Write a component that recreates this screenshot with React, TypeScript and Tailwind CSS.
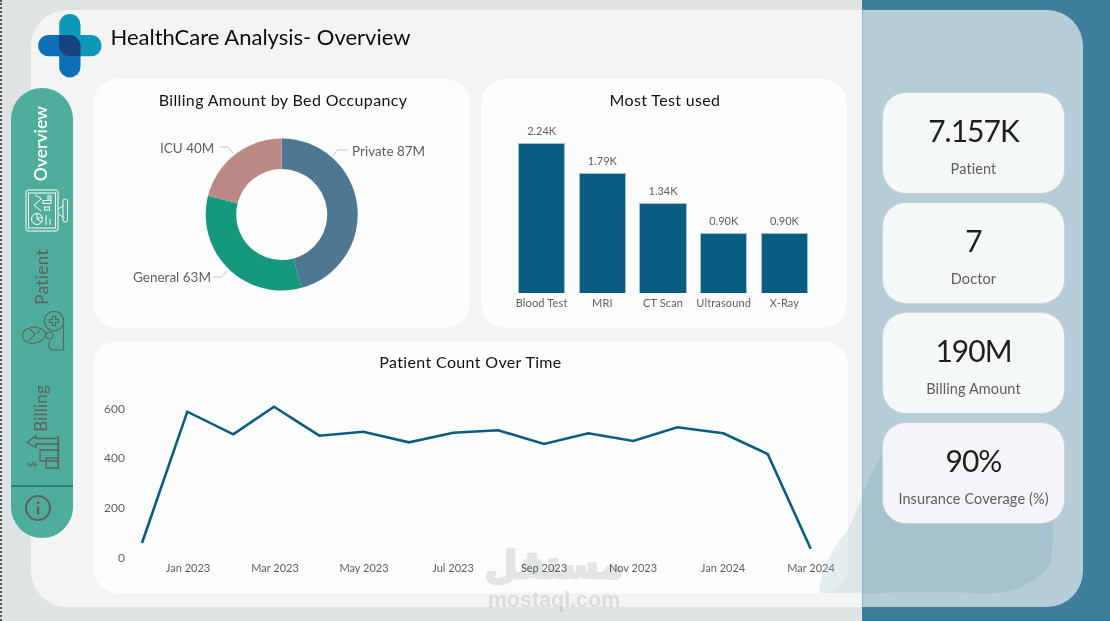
import React from "react";

const cx = 281.7, cy = 214.5, R = 76, r = 45.5;
const pol = (rad: number, a: number) => [cx + rad * Math.sin(a), cy - rad * Math.cos(a)];
const seg = (from: number, to: number) => {
  const a0 = (from / 190) * 2 * Math.PI, a1 = (to / 190) * 2 * Math.PI;
  const large = a1 - a0 > Math.PI ? 1 : 0;
  const [x0, y0] = pol(R, a0), [x1, y1] = pol(R, a1), [x2, y2] = pol(r, a1), [x3, y3] = pol(r, a0);
  return `M${x0} ${y0}A${R} ${R} 0 ${large} 1 ${x1} ${y1}L${x2} ${y2}A${r} ${r} 0 ${large} 0 ${x3} ${y3}Z`;
};

const linePts = "142,543 187.3,411.7 233.3,434.3 274,406.7 319.3,435.7 363.3,431.7 409,442.3 453.3,432.7 498.3,430.3 544,444 588.3,433.3 633.3,441 677.3,427.3 723.3,433.3 767.7,454 810.7,548.7";

const blob = "M818 598C820 570 832 548 848 530C856 515 866 480 882 455C930 430 990 425 1045 423C1052 480 1056 540 1050 565C1030 590 1000 596 970 593C930 590 880 592 818 598Z";

const bars = [
  { v: "2.24K", l: "Blood Test", h: "h-[150px]" },
  { v: "1.79K", l: "MRI", h: "h-[120px]" },
  { v: "1.34K", l: "CT Scan", h: "h-[90px]" },
  { v: "0.90K", l: "Ultrasound", h: "h-[60px]" },
  { v: "0.90K", l: "X-Ray", h: "h-[60px]" },
];

const kpis = [
  { v: "7.157K", l: "Patient", c: "bg-[#f5f8f9]" },
  { v: "7", l: "Doctor", c: "bg-[#f5f8f9]" },
  { v: "190M", l: "Billing Amount", c: "bg-[#f5f8f9]" },
  { v: "90%", l: "Insurance Coverage (%)", c: "bg-[#f3f5f9]" },
];

const Logo = () => (
  <svg width="64" height="64" viewBox="37.5 14 64 64" className="ml-[6.5px] mt-[4px] shrink-0">
    <defs>
      <linearGradient id="v" x1="0" y1="0" x2="0" y2="1">
        <stop offset="0.45" stopColor="#0d97b8" />
        <stop offset="0.55" stopColor="#0e6fb8" />
      </linearGradient>
      <linearGradient id="h" x1="0" y1="0" x2="1" y2="0">
        <stop offset="0.45" stopColor="#0e6fb8" />
        <stop offset="0.55" stopColor="#0d97b8" />
      </linearGradient>
    </defs>
    <rect x="58.7" y="14" width="21.3" height="63.4" rx="10.6" fill="url(#v)" />
    <rect x="37.7" y="35" width="63.4" height="21.3" rx="10.6" fill="url(#h)" />
    <path d="M58.7 35H69A11 11 0 0 1 80 46V56.3H69.5A10.8 10.8 0 0 1 58.7 45.5Z" fill="#17427f" />
  </svg>
);

const MonitorIcon = () => (
  <svg width="46" height="44" viewBox="9 3 46 44" fill="none" stroke="#fff" strokeWidth="1" className="self-start ml-[13px] mt-[8px]">
    <rect x="11" y="4" width="32" height="41" rx="2" />
    <rect x="13.5" y="7" width="27" height="35" />
    <path d="M20 9L27 13M26 13L19 19L26 25" />
    <rect x="28" y="14.5" width="8" height="3" />
    <rect x="29.5" y="21" width="5" height="3" />
    <rect x="33" y="10" width="3" height="3" />
    <circle cx="22" cy="33" r="5.5" />
    <path d="M22 27.5V33L26.5 36M22 33L27 31" />
    <path d="M31 29V39M35 33V39" />
    <path d="M43 23L48 20M43 28L48 31M40 25H41" />
    <rect x="48" y="13" width="4.5" height="23" rx="2" />
  </svg>
);

const PatientIcon = () => (
  <svg width="46" height="44" viewBox="7 3 46 44" fill="none" stroke="#5f6064" strokeWidth="1.1" className="self-start ml-[11px] mt-[3px]">
    <circle cx="39" cy="16" r="9.7" />
    <path d="M37.5 11.5H40.5V14.5H43.5V17.5H40.5V20.5H37.5V17.5H34.5V14.5H37.5Z" />
    <path d="M48.5 20V45H38C34 45 33 40 34.5 36" />
    <circle cx="34.5" cy="30.5" r="3.5" />
    <path d="M31 30C30 25 25 23 22 22.5C20 21.5 17 22 15 23C10 24 7.5 27 7.5 30.5C7.5 34 10 37 13 37C15 38.5 18 39 21 37.5C25 38 28 35 31 30Z" />
    <path d="M15 24L20 29L14 36M24 25L23 29" />
  </svg>
);

const BillingIcon = () => (
  <svg width="38" height="36" viewBox="23 434 38 36" fill="none" stroke="#5f6064" strokeWidth="1.3" className="self-start ml-[12px] mt-[3px]">
    <path d="M58.3 435V468" strokeWidth="1.6" />
    <path d="M58.3 437.5H36V434.8L27 441.5L36 446.5V443H58.3" />
    <path d="M58.3 449H40V460H58.3M58.3 457H46V467H58.3" />
    <text x="0" y="0" transform="translate(27.5 461) rotate(-90) translate(-6 8)" fill="#5f6064" stroke="none" fontSize="12" fontFamily="Lato, sans-serif">$</text>
  </svg>
);

const Vert = ({ children, cls }: { children: React.ReactNode; cls: string }) => (
  <div className={"[writing-mode:vertical-rl] rotate-180 leading-[24px] " + cls}>{children}</div>
);

export default function App() {
  return (
    <div className="relative w-[1110px] h-[621px] overflow-hidden flex pt-[10px] pb-[14px] pl-[31px] pr-[27px] bg-[linear-gradient(to_right,#dfe3e3_862px,#3f7e9a_862px)] font-['Lato',sans-serif] text-[#605e5c]">
      <div className="w-[831px] h-full bg-[#f3f5f5] rounded-l-[36px] flex flex-col shrink-0">
        <header className="h-[69px] flex items-start">
          <Logo />
          <h1 className="ml-[9px] mt-[14px] text-[22px] leading-[26px] text-[#0c0c0c] font-normal">HealthCare Analysis- Overview</h1>
        </header>
        <div className="flex flex-1">
          <nav className="-ml-[20px] mt-[9px] w-[62px] h-[450px] rounded-[31px] bg-[#4fae9b] flex flex-col shrink-0 relative z-10">
            <div className="pt-[18px] flex flex-col items-center h-[397px]">
              <Vert cls="text-[17.5px] text-white font-semibold ml-[-2px]">Overview</Vert>
              <MonitorIcon />
              <Vert cls="mt-[16px] text-[17px] text-[#5f6064] tracking-[0.4px]">Patient</Vert>
              <PatientIcon />
              <Vert cls="mt-[33px] text-[17px] text-[#5f6064] tracking-[0.2px] ml-[-2px]">Billing</Vert>
              <BillingIcon />
            </div>
            <div className="h-[2px] bg-[#2f7d6e]" />
            <div className="flex-1 flex items-start justify-center pt-[8px] pr-[8px]">
              <svg width="26" height="26" viewBox="0 0 26 26" fill="none" stroke="#5f6064" strokeWidth="2">
                <circle cx="13" cy="13" r="12" />
                <path d="M13 11.5V19.5" strokeWidth="2.6" />
                <path d="M13 6.5V9" strokeWidth="2.6" />
              </svg>
            </div>
          </nav>
          <main className="ml-[20px] w-[755px]">
            <div className="flex gap-[11px] h-[249px]">
              <section className="relative w-[377px] bg-[#fcfefe] rounded-[25px]">
                <h2 className="pt-[11px] text-center text-[16px] leading-[20px] text-[#111] tracking-[0.35px] font-normal pl-[3px]">Billing Amount by Bed Occupancy</h2>
                <svg width="377" height="249" viewBox="93 79 377 249" className="absolute inset-0">
                  <path d={seg(0, 87)} fill="#4e7892" />
                  <path d={seg(87, 150)} fill="#14997d" />
                  <path d={seg(150, 190)} fill="#bc8886" />
                  <g fill="none" stroke="#c4c4c4" strokeWidth="1">
                    <path d="M333 156L337 150H348" />
                    <path d="M220 147H228L233 153" />
                    <path d="M213 277H222L227 271" />
                  </g>
                  <g fontSize="13.5" fill="#605e5c" fontFamily="Lato, sans-serif">
                    <text x="352" y="156">Private 87M</text>
                    <text x="160" y="153">ICU 40M</text>
                    <text x="133" y="282">General 63M</text>
                  </g>
                </svg>
              </section>
              <section className="w-[366px] bg-[#fcfefe] rounded-[25px] flex flex-col">
                <h2 className="pt-[11px] text-center text-[16px] leading-[20px] text-[#111] tracking-[0.35px] font-normal pl-[2px]">Most Test used</h2>
                <div className="mt-[20px] pl-[37px] flex gap-[13.4px] items-end h-[163px]">
                  {bars.map((b) => (
                    <div key={b.l} className="w-[47.3px] flex flex-col items-center">
                      <span className="text-[11px] leading-[14px] mb-[5px] whitespace-nowrap">{b.v}</span>
                      <div className={"w-[47.3px] bg-[#0a5c80] border border-[#9dc0d2] border-b-0 " + b.h} />
                    </div>
                  ))}
                </div>
                <div className="mt-[3px] pl-[37px] flex gap-[13.4px]">
                  {bars.map((b) => (
                    <span key={b.l} className="w-[47.3px] text-center text-[11px] leading-[14px] whitespace-nowrap flex justify-center tracking-[0.15px]">{b.l}</span>
                  ))}
                </div>
              </section>
            </div>
            <section className="relative mt-[13px] h-[252px] bg-[#fcfefe] rounded-[25px]">
              <h2 className="pt-[11px] text-center text-[16px] leading-[20px] text-[#111] tracking-[0.35px] font-normal">Patient Count Over Time</h2>
              <svg width="755" height="252" viewBox="93 341 755 252" className="absolute inset-0">
                <polyline points={linePts} fill="none" stroke="#0a5c80" strokeWidth="2.6" strokeLinejoin="miter" />
                <g fontSize="12" fill="#605e5c" fontFamily="Lato, sans-serif" textAnchor="end">
                  <text x="125" y="413">600</text>
                  <text x="125" y="462">400</text>
                  <text x="125" y="512">200</text>
                  <text x="125" y="562">0</text>
                </g>
                <g fontSize="11" fill="#605e5c" fontFamily="Lato, sans-serif" textAnchor="middle">
                  <text x="188" y="572">Jan 2023</text>
                  <text x="275" y="572">Mar 2023</text>
                  <text x="364" y="572">May 2023</text>
                  <text x="453" y="572">Jul 2023</text>
                  <text x="544" y="572">Sep 2023</text>
                  <text x="633" y="572">Nov 2023</text>
                  <text x="723" y="572">Jan 2024</text>
                  <text x="811" y="572">Mar 2024</text>
                </g>
              </svg>
            </section>
          </main>
        </div>
      </div>

      <aside className="relative flex-1 h-full bg-[#b5cdd7] rounded-r-[36px] border-l border-[#8ab8e0] pt-[82px] pl-[19px] pr-[18px] flex flex-col gap-[8px]">
        {kpis.map((k) => (
          <div key={k.l} className={"relative z-20 h-[102px] rounded-[24px] border border-[#cfd2d3] flex flex-col items-center " + k.c}>
            <span className="mt-[17px] text-[30px] leading-[40px] text-[#201f1e] tracking-[-1px]">{k.v}</span>
            <span className="mt-[10px] text-[14.5px] leading-[18px] whitespace-nowrap tracking-[0.1px]">{k.l}</span>
          </div>
        ))}
      </aside>

      <svg width="1110" height="621" viewBox="0 0 1110 621" className="absolute inset-0 z-10 pointer-events-none">
        <defs>
          <clipPath id="cr"><rect x="863" y="0" width="220" height="621" /></clipPath>
          <clipPath id="cl"><rect x="815" y="0" width="47" height="593" /></clipPath>
        </defs>
        <path clipPath="url(#cr)" fill="#a5c2ce" d={blob} />
        <path clipPath="url(#cl)" fill="#a5c2ce" fillOpacity="0.28" d={blob} />
      </svg>

      <div className="absolute inset-y-0 left-0 w-[2px] border-l-2 border-dotted border-[#555]" />
      <div className="absolute left-0 right-0 bottom-0 h-[1px] ml-[862px] bg-[#1f74ad]" />

      <div className="absolute z-30 left-[478px] top-[540px] w-[152px] flex flex-col items-center pointer-events-none text-[#e4e6e6] mix-blend-multiply">
        <span dir="rtl" lang="ar" className="font-['DejaVu_Sans',sans-serif] font-bold text-[38px] leading-[50px] [-webkit-text-stroke:2.5px_#e4e6e6]">مستقل</span>
        <span className="font-['Liberation_Sans',sans-serif] font-bold text-[21.5px] leading-[22px] -mt-[1px]">mostaql.com</span>
      </div>
    </div>
  );
}
